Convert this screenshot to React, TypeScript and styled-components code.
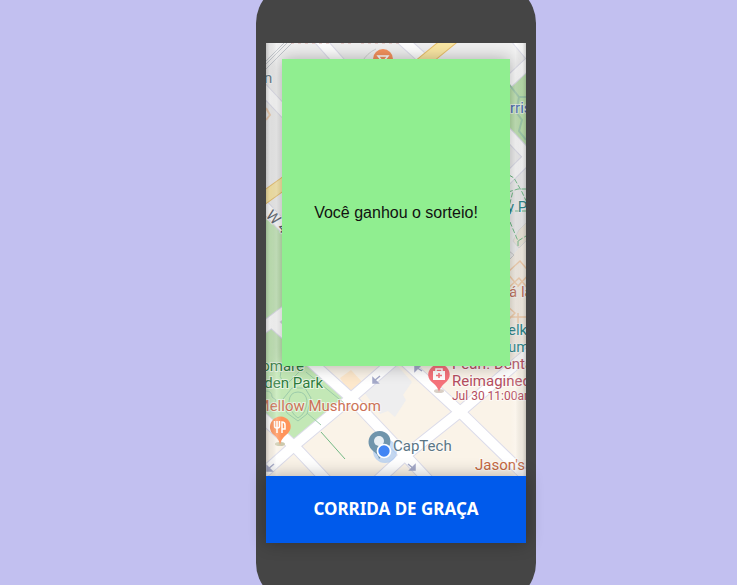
import React from "react";
import styled, { createGlobalStyle } from "styled-components";

const GlobalStyle = createGlobalStyle`
  *, *::before, *::after { box-sizing: border-box; }
  body { margin: 0; background: #c2c0f0; font-family: "Liberation Sans", Arial, sans-serif; }
`;

const Page = styled.main`
  display: flex;
  align-items: center;
  justify-content: center;
  height: 100vh;
  padding-left: 55px;
  overflow: hidden;
`;

const Phone = styled.div`
  flex: none;
  width: 280px;
  padding: 60px 10px;
  border-radius: 40px;
  background: #454545;
`;

const Screen = styled.div`
  display: flex;
  flex-direction: column;
  min-height: 500px;
`;

const MapArea = styled.section`
  position: relative;
  display: flex;
  flex: 1;
  padding: 16px 16px 110px;
  overflow: hidden;
`;

const MapDrawing = styled.svg`
  position: absolute;
  inset: 0;
  width: 100%;
  height: 100%;
`;

const Card = styled.div`
  position: relative;
  display: flex;
  flex: 1;
  align-items: center;
  justify-content: center;
  background: #90ee90;
  color: #111;
  font-size: 16px;
  line-height: 21px;
  box-shadow: 0 0 16px rgba(0, 0, 0, 0.3);
`;

const Message = styled.p`
  margin: 0;
`;

const RideButton = styled.button`
  position: relative;
  height: 67px;
  padding: 0 16px;
  border: 0;
  background: #005aeb;
  color: #fff;
  font: 700 17px/24px "Noto Sans", Tahoma, sans-serif;
  text-transform: uppercase;
  box-shadow: 0 0 16px rgba(0, 0, 0, 0.3);
  cursor: pointer;
`;

const Label = styled.text<{ $color: string; $size?: number }>`
  font-family: Roboto, sans-serif;
  font-size: ${(p) => p.$size ?? 15}px;
  fill: ${(p) => p.$color};
  stroke: #fff;
  stroke-opacity: 0.6;
  stroke-width: 2px;
  paint-order: stroke;
`;

const roads = [
  "M258 478 L296 444 L351 398 L420 338",
  "M300 352 L351 398 L402 452 L430 482",
  "M376 482 L402 458 L460 412 L540 343",
  "M396 353 L460 412 L534 484",
  "M254 410 L296 448 L330 484",
  "M318 38 L350 74",
  "M398 36 L440 74",
  "M260 86 L290 118",
  "M258 332 L292 306",
  "M272 322 L292 340",
  "M262 204 L292 236",
  "M500 90 L532 60",
  "M514 36 L534 60",
  "M502 128 L534 162",
  "M500 186 L534 152",
];

function CityMap() {
  return (
    <MapDrawing viewBox="266 43 260 433" preserveAspectRatio="xMidYMid slice" aria-hidden="true">
      <defs>
        <linearGradient id="edges">
          <stop offset="0" stopColor="#333" stopOpacity="0.25" />
          <stop offset="0.015" stopColor="#777" stopOpacity="0.1" />
          <stop offset="0.04" stopColor="#fff" stopOpacity="0.2" />
          <stop offset="0.06" stopColor="#fff" stopOpacity="0" />
          <stop offset="0.94" stopColor="#fff" stopOpacity="0" />
          <stop offset="0.96" stopColor="#fff" stopOpacity="0.2" />
          <stop offset="0.985" stopColor="#777" stopOpacity="0.1" />
          <stop offset="1" stopColor="#333" stopOpacity="0.25" />
        </linearGradient>
      </defs>

      <path fill="#f0f0f0" d="M266 43h260v433H266z" />
      <path fill="#faf3e8" d="M310 360h216v116H266v-70zM502 268l24-28v236h-24z" />
      <path fill="#c3e8b6" d="M266 219l30 24v112l18 13 31 32-49 42-30-27z" />
      <path fill="#bbe3ac" d="M510 86l16-16v76l-16-17z" />
      <path fill="#eeeeef" d="M364 392l30-30 18 20-9 13 3 5-11 17-7-6-8 3z" />
      <path fill="#fde8cc" d="M340 378l11-8 13 14-13 11z" />

      <g fill="none" stroke="#dcdcea" strokeWidth="12">
        {roads.map((d) => <path key={d} d={d} />)}
      </g>
      <g fill="none" stroke="#fff" strokeWidth="10">
        {roads.map((d) => <path key={d} d={d} />)}
      </g>

      <path d="M258 202l32-23M416 68l38-31" fill="none" stroke="#eac06b" strokeWidth="13" />
      <path d="M258 202l32-23M416 68l38-31" fill="none" stroke="#fbe8a4" strokeWidth="11" />
      <path d="M264 63l22-22m-22 25l25-25m-25 30l30-30" fill="none" stroke="#bfc4ca" />
      <path d="M362 62q5-9 14-13" fill="none" stroke="#d0d0d0" strokeWidth="1" />
      <path d="M291 43h42m8 0h12m8 0h39" fill="none" stroke="#dba9a3" strokeDasharray="3 4" strokeWidth="1" />
      <path d="M266 108l4 7-4 5" fill="none" stroke="#efceb0" strokeWidth="2" />

      <g fill="none" stroke="#9ccbaa">
        <path strokeWidth="2" d="M508 83l11 14h8M519 97l-3 15 6 8-3 11 7 9" />
        <path d="M284 366q-9 12 3 18l12-12q5-11-2-13M266 391q6 0 6 6l4 3-4 8q-4 5-8 2" />
        <path d="M292 388h13l6 10-4 16-9 7-11-8-4-14z" />
        <path d="M298 392q8 0 9 9-1 13-9 17-8-5-9-17 1-9 9-9zM306 372l38 31M307 413l14 12" />
        <path stroke="#73b985" d="M321 432l24 27" />
      </g>
      <path d="M519 230l8-8v18l-8 8-6-7z" fill="#f0eadc" stroke="#ddd" />
      <path d="M504 247l10 8-8 8" fill="#ececec" stroke="#ccc" />
      <path d="M509 175l5 3 8 14 5 11M508 192l10-3h9M508 211l5-20M508 211h20M510 222l8 19 8-5m-8 5v7" fill="none" stroke="#67ba80" strokeDasharray="5 2" />
      <path d="M507 273l13-12 10 12-12 13zM506 290l13-12 11 13M507 306l8 7-7 7m10-7v12m-13-8h25" fill="none" stroke="#f6cfaa" strokeWidth="1.5" />

      <g fill="#a5aaca" stroke="#a5aaca" strokeWidth="1.5">
        <path d="M380 376l-6 5m-1-3v5h5zM274 464l-6 5m-1-3v5h5zM422 371l-6-4m-1 4v-5h5zM408 464l6 5m1-4v5h-5z" />
      </g>

      <circle cx="383" cy="59" r="10" fill="#f5925d" />
      <path d="M378 56h10l-5 6z" fill="none" stroke="#fff" strokeWidth="1.5" />

      <ellipse cx="280" cy="444" rx="5" ry="2" fill="#ccc9ac" />
      <path d="M280 445q-1-6-6-10c-5-4-5-10-2-14 4-6 13-6 17 0 3 5 2 10-3 14q-5 4-6 10z" fill="#ff945b" />
      <path d="M274.500 421v5q0 2 2 2h1q2 0 2-2v-5m-2.500 0v12M282 433v-11q3 0 3 3v4h-3" fill="none" stroke="#fff" strokeWidth="1.5" />

      <ellipse cx="439" cy="391" rx="5" ry="2" fill="#d9cfc5" />
      <path d="M439 392q-1-5-6-9c-6-4-6-11-2-15 5-5 13-5 17 1 3 5 2 10-3 14q-5 4-6 9z" fill="#f5737b" />
      <path d="M433 371h12v9h-12z" fill="#fff" />
      <path d="M436 371v-2h6v2" fill="none" stroke="#fff" strokeWidth="1.5" />
      <path d="M439 373v5m-3-2.500h6" stroke="#f5737b" strokeWidth="1.5" />

      <circle cx="385" cy="451" r="12" fill="#9ec5f5" fillOpacity="0.6" />
      <path d="M379 459q-1-5-6-8c-5-4-6-11-2-16 5-6 14-5 18 1 3 5 1 11-3 15l-7 8z" fill="#7095ac" />
      <circle cx="379" cy="441" r="5" fill="#e8eff4" />
      <circle cx="384" cy="451" r="6.5" fill="#4285f4" stroke="#fff" strokeWidth="1.7" />

      <Label x="264" y="83" $color="#627887">n</Label>
      <Label $color="#555b65" transform="translate(265 216) rotate(46)">W 4th St</Label>
      <Label x="510" y="113" $color="#4267b0">rris</Label>
      <Label x="507" y="212" $color="#23858a">y Pa</Label>
      <Label x="509" y="297" $color="#bf6a55">á la</Label>
      <Label x="508" y="335" $color="#23858a">elk</Label>
      <Label x="508" y="352" $color="#23858a">um</Label>
      <Label x="452" y="369" $color="#b54e60">Pearl. Dental</Label>
      <Label x="452" y="386" $color="#b54e60">Reimagined</Label>
      <Label x="452" y="400" $size={12} $color="#b54e60">Jul 30 11:00am</Label>
      <Label x="304" y="371" textAnchor="end" $color="#2f7d3e">Idlomare</Label>
      <Label x="323" y="388" textAnchor="end" $color="#2f7d3e">Garden Park</Label>
      <Label x="381" y="411" textAnchor="end" $color="#cc7357">Mellow Mushroom</Label>
      <Label x="393" y="451" $color="#5b7686">CapTech</Label>
      <Label x="475" y="470" $color="#c76842">Jason's</Label>
      <path fill="url(#edges)" d="M266 43h260v433H266z" />
    </MapDrawing>
  );
}

export default function App() {
  return (
    <>
      <GlobalStyle />
      <Page>
        <Phone>
          <Screen>
            <MapArea>
              <CityMap />
              <Card>
                <Message>Você ganhou o sorteio!</Message>
              </Card>
            </MapArea>
            <RideButton type="button">Corrida de graça</RideButton>
          </Screen>
        </Phone>
      </Page>
    </>
  );
}
